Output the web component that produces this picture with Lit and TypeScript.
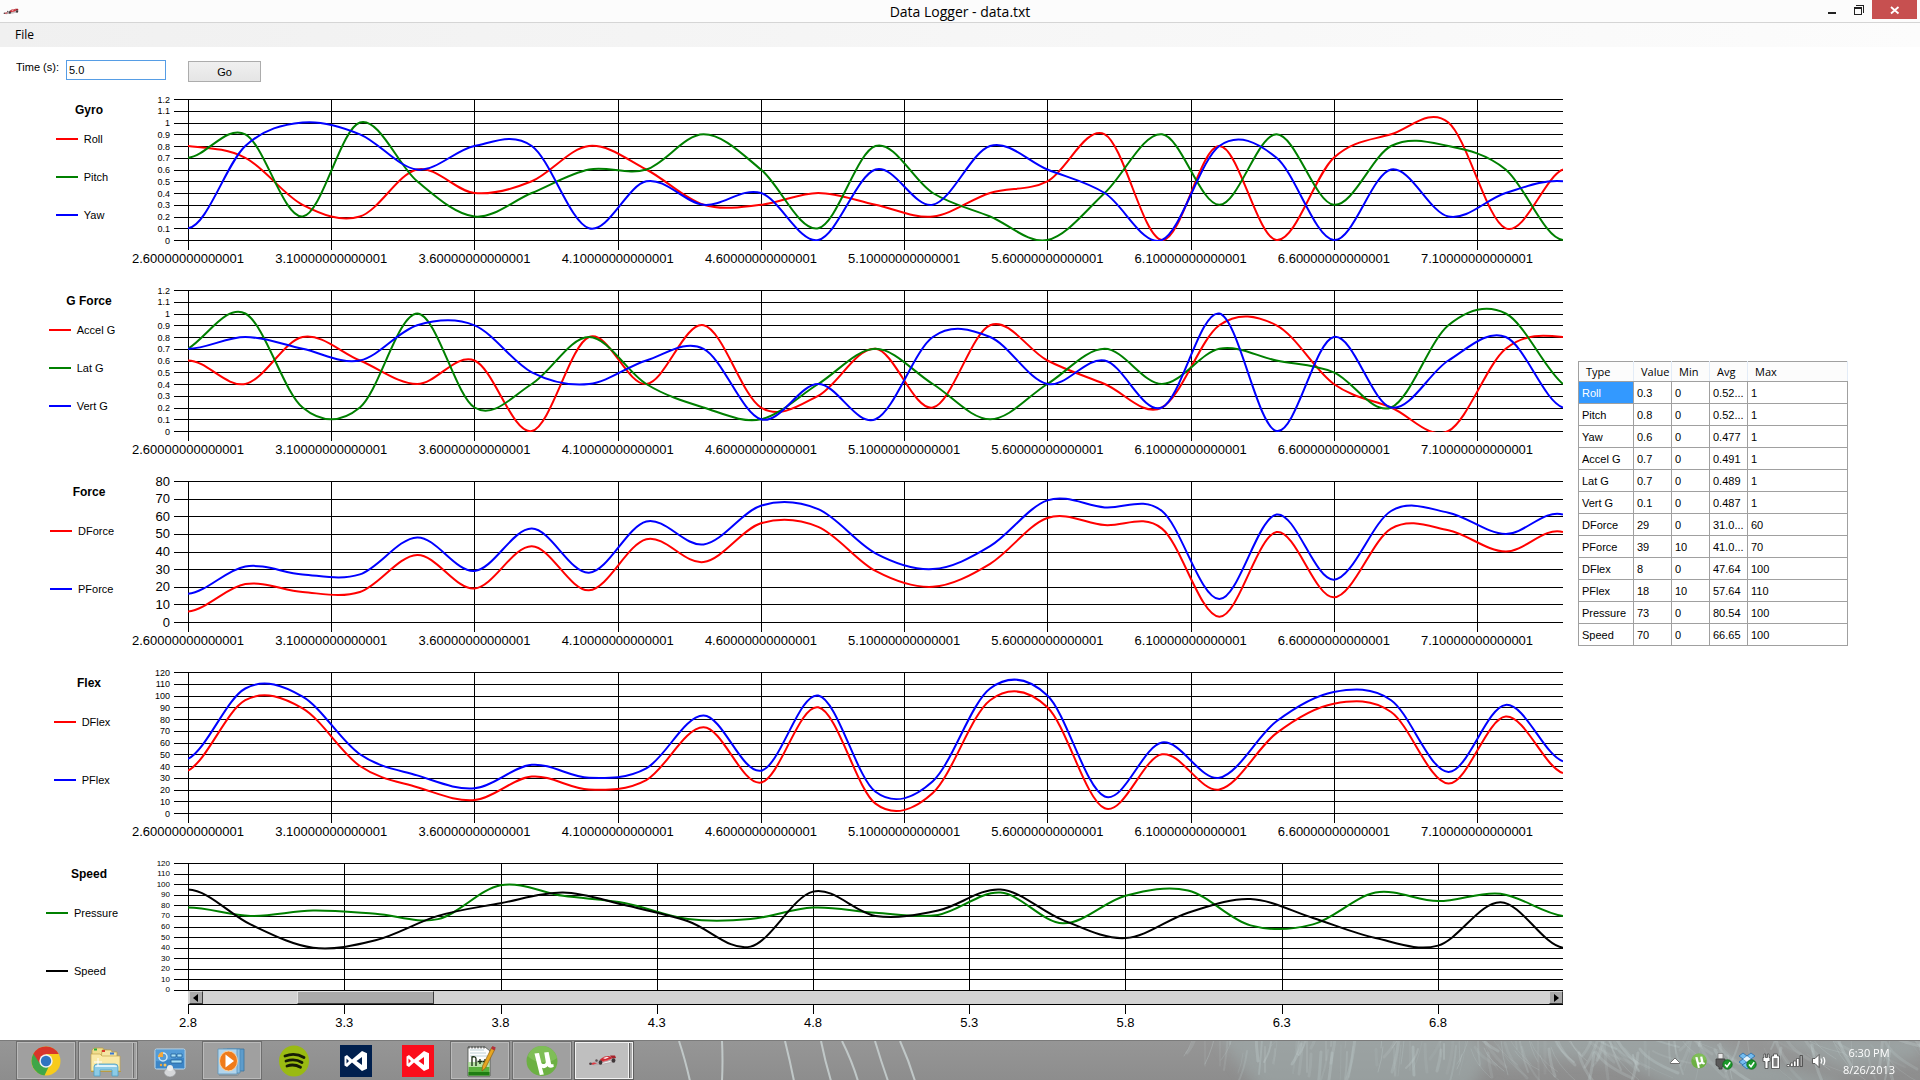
import { LitElement, html, svg, css, nothing } from "lit";
import { customElement, property, state } from "lit/decorators.js";
import { classMap } from "lit/directives/class-map.js";
import { styleMap } from "lit/directives/style-map.js";

interface Series {
  name: string;
  color: string;
  values: number[];
  /** Samples just outside the visible window, which shape the ends of the curve. */
  before: number;
  after: number;
}

interface ChartSpec {
  title: string;
  start: number;
  max: number;
  tick: number;
  labels: "small" | "tiny" | "large";
  plotHeight: number;
  suffix: string;
  scroll?: boolean;
  series: Series[];
}

const STEP = 0.2;
const GRID_STEP = 0.5;
const PLOT_WIDTH = 1375;

const RED = "#ff0000";
const GREEN = "#008000";
const BLUE = "#0000ff";

const dForce = [6, 21.5, 17, 17, 38, 19, 43, 18, 47, 34, 56, 54, 29, 20, 33, 59, 55, 53, 3, 51, 14, 53, 52, 40, 51];
const dFlex = [36, 96, 89, 40, 22, 11, 31, 20, 28, 73, 26, 90, 8, 17, 96, 90, 4, 50, 20, 68, 93, 86, 25, 82, 34];

const CHARTS: ChartSpec[] = [
  {
    title: "Gyro", start: 2.6, max: 1.2, tick: 0.1, labels: "small", plotHeight: 141, suffix: "0000000000001",
    series: [
      { name: "Roll", color: RED, before: 0.8, after: 0.5, values: [0.8, 0.7, 0.3, 0.2, 0.6, 0.4, 0.5, 0.8, 0.6, 0.3, 0.3, 0.4, 0.3, 0.2, 0.4, 0.5, 0.9, 0, 0.8, 0, 0.7, 0.9, 1, 0.1, 0.6] },
      { name: "Pitch", color: GREEN, before: 0.8, after: 0.5, values: [0.7, 0.9, 0.2, 1, 0.5, 0.2, 0.4, 0.6, 0.6, 0.9, 0.6, 0.1, 0.8, 0.4, 0.2, 0, 0.4, 0.9, 0.3, 0.9, 0.3, 0.8, 0.8, 0.6, 0] },
      { name: "Yaw", color: BLUE, before: 0.7, after: 0.3, values: [0.1, 0.8, 1, 0.9, 0.6, 0.8, 0.8, 0.1, 0.5, 0.3, 0.4, 0, 0.6, 0.3, 0.8, 0.6, 0.4, 0, 0.8, 0.7, 0, 0.6, 0.2, 0.4, 0.5] },
    ],
  },
  {
    title: "G Force", start: 2.6, max: 1.2, tick: 0.1, labels: "small", plotHeight: 141, suffix: "0000000000001",
    series: [
      { name: "Accel G", color: RED, before: 0.4, after: 0.6, values: [0.6, 0.4, 0.8, 0.6, 0.4, 0.6, 0, 0.8, 0.4, 0.9, 0.2, 0.3, 0.7, 0.2, 0.9, 0.6, 0.4, 0.2, 0.9, 0.9, 0.4, 0.2, 0, 0.7, 0.8] },
      { name: "Lat G", color: GREEN, before: 0.4, after: 0.2, values: [0.7, 1, 0.2, 0.2, 1, 0.2, 0.4, 0.8, 0.4, 0.2, 0.1, 0.4, 0.7, 0.4, 0.1, 0.4, 0.7, 0.4, 0.7, 0.6, 0.5, 0.2, 0.9, 1, 0.4] },
      { name: "Vert G", color: BLUE, before: 0.8, after: 0.5, values: [0.7, 0.8, 0.7, 0.6, 0.9, 0.9, 0.5, 0.4, 0.6, 0.7, 0.1, 0.4, 0.1, 0.8, 0.8, 0.4, 0.6, 0.2, 1, 0, 0.8, 0.2, 0.6, 0.8, 0.2] },
    ],
  },
  {
    title: "Force", start: 2.6, max: 80, tick: 10, labels: "large", plotHeight: 141, suffix: "0000000000001",
    series: [
      { name: "DForce", color: RED, before: 15, after: 20, values: dForce },
      { name: "PForce", color: BLUE, before: 25, after: 30, values: dForce.map((v) => v + 10) },
    ],
  },
  {
    title: "Flex", start: 2.6, max: 120, tick: 10, labels: "small", plotHeight: 141, suffix: "0000000000001",
    series: [
      { name: "DFlex", color: RED, before: 45, after: 50, values: dFlex },
      { name: "PFlex", color: BLUE, before: 55, after: 60, values: dFlex.map((v) => v + 10) },
    ],
  },
  {
    title: "Speed", start: 2.8, max: 120, tick: 10, labels: "tiny", plotHeight: 127, suffix: "", scroll: true,
    series: [
      { name: "Pressure", color: GREEN, before: 70, after: 76, values: [78, 70, 75, 72, 67, 99, 89, 82, 67, 67, 78, 73, 71, 92, 63, 89, 94, 61, 62, 92, 84, 91, 70] },
      { name: "Speed", color: "#000000", before: 66, after: 66, values: [95, 62, 40, 47, 70, 82, 92, 80, 65, 41, 93, 70, 75, 95, 66, 49, 73, 86, 68, 49, 42, 83, 40] },
    ],
  },
];

const COLUMNS = ["Type", "Value", "Min", "Avg", "Max"];
const ROWS: string[][] = [
  ["Roll", "0.3", "0", "0.52...", "1"],
  ["Pitch", "0.8", "0", "0.52...", "1"],
  ["Yaw", "0.6", "0", "0.477", "1"],
  ["Accel G", "0.7", "0", "0.491", "1"],
  ["Lat G", "0.7", "0", "0.489", "1"],
  ["Vert G", "0.1", "0", "0.487", "1"],
  ["DForce", "29", "0", "31.0...", "60"],
  ["PForce", "39", "10", "41.0...", "70"],
  ["DFlex", "8", "0", "47.64", "100"],
  ["PFlex", "18", "10", "57.64", "110"],
  ["Pressure", "73", "0", "80.54", "100"],
  ["Speed", "70", "0", "66.65", "100"],
];

/** Cardinal spline through evenly spaced samples. */
function splinePath(series: Series, max: number, width: number, height: number): string {
  const dx = width / (series.values.length - 1);
  const pts = [series.before, ...series.values, series.after].map((v, i) => [(i - 1) * dx, height - (v / max) * height]);
  let d = `M${pts[1][0].toFixed(1)} ${pts[1][1].toFixed(1)}`;
  for (let i = 1; i < pts.length - 2; i++) {
    const [a, b, c, e] = [pts[i - 1], pts[i], pts[i + 1], pts[i + 2]];
    const p = [b[0] + (c[0] - a[0]) / 6, b[1] + (c[1] - a[1]) / 6, c[0] - (e[0] - b[0]) / 6, c[1] - (e[1] - b[1]) / 6, c[0], c[1]];
    d += `C${p.map((n) => n.toFixed(1)).join(" ")}`;
  }
  return d;
}

@customElement("time-chart")
export class TimeChart extends LitElement {
  @property({ attribute: false }) spec!: ChartSpec;

  static styles = css`
    :host {
      display: grid;
      grid-template-columns: 130px 40px minmax(0, 1fr);
      column-gap: 0;
      padding-bottom: 23px;
      font-family: "Liberation Sans", Arial, sans-serif;
      color: #000;
    }
    :host(:last-of-type) {
      padding-bottom: 0;
    }
    .legend {
      padding-left: 34px;
    }
    .title {
      margin: 0;
      padding: 3px 0 2px 14px;
      font-size: 12px;
      line-height: 16px;
      font-weight: 700;
      text-align: center;
    }
    .items {
      margin: 0;
      padding: 0;
      list-style: none;
      display: grid;
      justify-content: center;
      grid-auto-rows: 38px;
      font-size: 11px;
    }
    .items.pair {
      grid-auto-rows: 58px;
    }
    .item {
      display: flex;
      align-items: center;
      gap: 6px;
      white-space: nowrap;
    }
    .swatch {
      display: block;
      width: 22px;
      height: 2px;
    }
    .ylabels {
      display: flex;
      flex-direction: column;
      justify-content: space-between;
      align-items: flex-end;
      line-height: 0;
    }
    .ylabels span {
      display: flex;
      align-items: center;
      height: 1px;
    }
    .small {
      font-size: 9px;
    }
    .tiny {
      font-size: 8px;
    }
    .large {
      font-size: 13px;
    }
    .body {
      padding-left: 18px;
      min-width: 0;
    }
    .plot {
      display: block;
      width: 100%;
      overflow: visible;
    }
    .grid line {
      stroke: #000;
      stroke-width: 1;
      shape-rendering: crispEdges;
      vector-effect: non-scaling-stroke;
    }
    .curve {
      fill: none;
      stroke-width: 2;
      vector-effect: non-scaling-stroke;
    }
    .xlabels {
      display: grid;
      padding-top: 10px;
      font-size: 13px;
      line-height: 16px;
    }
    .xlabels span {
      display: flex;
      justify-content: center;
      width: 0;
      white-space: nowrap;
    }
    .scroll {
      position: relative;
      display: grid;
      grid-template-columns: 14px minmax(0, 1fr) 14px;
      height: 13px;
      padding-left: 1px;
      background: #d3d3d3;
      border-bottom: 1px solid #000;
    }
    .arrow {
      display: grid;
      place-items: center;
      padding: 0;
      background: #a9a9a9;
      border: 1px solid;
      border-color: #d3d3d3 #3c3c3c #3c3c3c #d3d3d3;
    }
    .arrow svg {
      display: block;
      width: 6px;
      height: 8px;
    }
    .range {
      appearance: none;
      width: 100%;
      height: 13px;
      margin: 0;
      background: #d3d3d3;
    }
    .range::-webkit-slider-thumb {
      appearance: none;
      width: 137px;
      height: 13px;
      background: #a9a9a9;
      border: 1px solid;
      border-color: #e4e4e4 #3c3c3c #3c3c3c #e4e4e4;
      border-radius: 0;
    }
  `;

  render() {
    const s = this.spec;
    const h = s.plotHeight;
    const span = (s.series[0].values.length - 1) * STEP;
    const rows = Math.round(s.max / s.tick);
    const ticks = Array.from({ length: rows + 1 }, (_, i) => i);
    const xCount = Math.floor(span / GRID_STEP + 0.001) + 1;
    const xs = Array.from({ length: xCount }, (_, i) => i);
    const rest = span - (xCount - 1) * GRID_STEP;
    const xColumns = `repeat(${xCount - 1}, minmax(0, 50fr)) minmax(0, ${Math.round(rest * 100)}fr)`;
    return html`
      <div class="legend">
        <h2 class="title">${s.title}</h2>
        <ul class=${classMap({ items: true, pair: s.series.length === 2 })}>
          ${s.series.map(
            (r) => html`<li class="item"><span class="swatch" style=${styleMap({ background: r.color })}></span>${r.name}</li>`
          )}
        </ul>
      </div>
      <div class="ylabels ${s.labels}" style=${styleMap({ height: `${h + 1}px` })}>
        ${ticks.map((i) => html`<span>${Number(((rows - i) * s.tick).toFixed(1))}</span>`)}
      </div>
      <div class="body">
        <svg class="plot" height=${h + 1} viewBox="0 0 ${PLOT_WIDTH} ${h + 1}" preserveAspectRatio="none" role="img" aria-label=${s.title}>
          <g class="grid">
            ${ticks.map((i) => {
              const y = Math.round((i * h) / rows) + 0.5;
              return svg`<line x1="-14" x2=${PLOT_WIDTH} y1=${y} y2=${y}></line>`;
            })}
            ${xs.map((i) => {
              const x = Math.round((i * GRID_STEP * PLOT_WIDTH) / span) + 0.5;
              return svg`<line x1=${x} x2=${x} y1="0" y2="151"></line>`;
            })}
          </g>
          <svg x="0" y="0" width=${PLOT_WIDTH} height=${h + 1} overflow="hidden">
            ${s.series.map((r) => svg`<path class="curve" stroke=${r.color} d=${splinePath(r, s.max, PLOT_WIDTH, h)}></path>`)}
          </svg>
        </svg>
        ${s.scroll
          ? html`<div class="scroll">
              <button class="arrow" aria-label="Scroll left"><svg viewBox="0 0 6 8"><path d="M5 0v8L0 4z" /></svg></button>
              <input class="range" type="range" min="0" max="1000" value="78" aria-label="Time window" />
              <button class="arrow" aria-label="Scroll right"><svg viewBox="0 0 6 8"><path d="M1 0v8l5-4z" /></svg></button>
            </div>`
          : nothing}
        <div class="xlabels" style=${styleMap({ gridTemplateColumns: xColumns })}>
          ${xs.map((i) => html`<span>${(s.start + i * GRID_STEP).toFixed(1)}${s.suffix}</span>`)}
        </div>
      </div>
    `;
  }
}

const carArt = svg`
  <path d="M1 8.500 6 6.800l5-2 4-2.600 4-1.200 5 .3 4 1.500-.5 3-3 1.500-5 1.500-7 1-7 .8z" fill="#b5aeb0"/>
  <path d="M12 4.500l4-2.700 4-.8 3 .8 1 1.800-5 1.900-6 1.200z" fill="#cf2a33"/>
  <path d="M15 3l4-1.200 2 .7-4 1.600z" fill="#fbe9ea"/>
  <path d="M22 .5h5l1 2.500-4 .3z" fill="#a8222b"/>
  <path d="M1 8.700l5-1.300 3 .8-4 1.500z" fill="#dc3a43"/>
  <ellipse cx="12.500" cy="7.500" rx="1.800" ry="2.300" fill="#3d3537"/>
  <ellipse cx="25.500" cy="5.500" rx="1.900" ry="2.300" fill="#3f3739"/>
  <ellipse cx="2.500" cy="8.800" rx="1.300" ry="1.300" fill="#4a4244"/>
  <ellipse cx="8.500" cy="5.500" rx="1.200" ry="1.300" fill="#5c5255"/>
  <path d="M14.500 8l8-2.200v1.200l-8 1.800z" fill="#f6f2f2"/>
  <path d="M15 6l6-1.700v.8l-6 1.700z" fill="#e7585f"/>`;

const utorrentArt = svg`
  <ellipse cx="16" cy="16" rx="15.500" ry="15" fill="#6cb043"/>
  <path d="M16 1a15.500 15 0 0 1 15 12C22 20 8 18 2 11 4 5 9 1 16 1z" fill="#8cc866" opacity=".6"/>
  <path d="M8.500 8.500 13 8l2.300 9.500c.6 2.300 4.800 2 4.500-.8L18.200 7.500l4.400-.5 2.300 11c.3 1.600 1.300 1.500 2.400 1.100l.5 2.700c-2.700 1.600-5.400 1.100-6.300-.7-1.300 2-3.800 2.600-5.500 1.600l1.800 6.800-4 .5z" fill="#fff"/>`;

const TASK_ICONS: Record<string, unknown> = {
  Chrome: svg`
    <circle cx="16" cy="16" r="14.500" fill="#f7cb1b"/>
    <path d="M16 16 3.400 8.800A14.500 14.500 0 0 0 14.500 30.400L20 19z" fill="#3fa648"/>
    <path d="M16 16V9h12.700A14.500 14.500 0 0 0 3.400 8.800L9.500 18z" fill="#d8352a"/>
    <circle cx="16" cy="16" r="6.700" fill="#f1f1f1"/><circle cx="16" cy="16" r="5.200" fill="#2f74c0"/>`,
  Explorer: svg`
    <path d="M4 3h9l1 2h3v20H2V5z" fill="#f1dd8d" stroke="#b99b42" stroke-width=".7"/>
    <path d="M12 5h9l1 2h5v18H10z" fill="#f5e5a3" stroke="#b99b42" stroke-width=".7"/>
    <path d="M4 3.500h3v2H4z" fill="#29a93d"/><path d="M12 5h3v2h-3z" fill="#d9392b"/><path d="M20 7.500h4v2h-4z" fill="#3b78d4"/>
    <path d="M1 9h9l2 2h18v15H1z" fill="#fae9a6" stroke="#c2a44b" stroke-width=".7"/>
    <path d="M1 26h30v1H1z" fill="#b99b42"/>
    <path d="M4 31V22q0-3 3-3h18q3 0 3 3v9h-6v-6H10v6z" fill="#8ccbe6" stroke="#4f9fc4" stroke-width=".8"/>
    <path d="M5 22q0-2 3-2h16q3 0 3 2z" fill="#dff3fb"/><path d="M8 13v8M4 17h8" stroke="#fff" stroke-width="1"/>`,
  "Control Panel": svg`
    <rect x="1" y="4" width="30" height="20" rx="1.500" fill="#3c86c7" stroke="#bcdcf2" stroke-width="1"/>
    <path d="M2 5h28v8C20 11 10 18 2 16z" fill="#5ea5de" opacity=".7"/>
    <circle cx="9" cy="12" r="4" fill="none" stroke="#cfe8f8" stroke-width="1.500"/>
    <path d="M9 12V7a5 5 0 0 0-5 5z" fill="#f2a73a"/>
    <path d="M17 9h5v3h-5zM23 9h5v3h-5zM17 15h11v3H17z" fill="#a9e1f7" stroke="#22609a" stroke-width=".8"/>
    <circle cx="7" cy="20" r="1.200" fill="#f2a73a"/><circle cx="11" cy="20" r="1.500" fill="#f7c35c"/>
    <path d="M10 28q0-4 6-6 6 2 6 6-2 4-6 4t-6-4z" fill="#d5d7d9" stroke="#909396" stroke-width=".6"/>
    <circle cx="16" cy="23" r="3" fill="#eceded"/>`,
  "Media Player": svg`
    <path d="M11 4h17v22H11z" fill="#5d9ccb" stroke="#3b749f" stroke-width=".8"/>
    <path d="M7 4h17v24H7z" fill="#8dbfe2" stroke="#4d8ab6" stroke-width=".8"/>
    <path d="M2 4h19v25H2z" fill="#b2d5ec" stroke="#5a94bd" stroke-width=".8"/>
    <path d="M3 30h18l2-1v1l-2 1H3z" fill="#687f8e" opacity=".5"/>
    <ellipse cx="12.500" cy="16" rx="9" ry="10" fill="#ef7b1a" stroke="#fbd1a0" stroke-width="1"/>
    <path d="M9.500 9.500v13l8.500-6.500z" fill="#fff"/>`,
  Spotify: svg`
    <ellipse cx="16" cy="16" rx="15" ry="15.500" fill="#9aba12"/>
    <path d="M7 11q10-4 19 1.500M8 16q9-3 16 1.500M9 21q7-2.500 13.500 1.300" fill="none" stroke="#151a05" stroke-width="2.800" stroke-linecap="round"/>`,
  "Visual Studio": svg`
    <path d="M0 0h32v32H0z" fill="#01204e"/>
    <path d="M22 6l5 2.200v15.600L22 26 12 17.500 7 22l-2.500-1.500v-9L7 10l5 4.500zM22 12l-5.500 4 5.500 4zM6.500 13.500v5L9 16z" fill="#fff" fill-rule="evenodd"/>`,
  Blend: svg`
    <path d="M0 0h32v32H0z" fill="#fb0d1b"/>
    <path d="M22 6l5 2.200v15.600L22 26 12 17.500 7 22l-2.500-1.500v-9L7 10l5 4.500zM22 12l-5.500 4 5.500 4zM6.500 13.500v5L9 16z" fill="#fff" fill-rule="evenodd"/>`,
  Notepad: svg`
    <path d="M4 2h17l5 4v25H4z" fill="#fdfdfd" stroke="#4a4f4a" stroke-width=".8"/>
    <path d="M4.500 17h21v13.500h-21z" fill="#58b13b"/><path d="M4.500 17h21v5h-21z" fill="#b9e3a6"/><path d="M4.500 27h21v3.500h-21z" fill="#1e7d12"/>
    <path d="M6 5h14M6 8h16M6 11h17" stroke="#bcd0d6" stroke-width="1"/>
    <path d="M5 1.500v2M8 1.500v2M11 1.500v2M14 1.500v2M17 1.500v2M20 1.500v2" stroke="#333" stroke-width="1"/>
    <path d="M8 21v-9q4-1 4 2v7M16 14v5M13.500 16.500h5M21 14v5M18.800 16.500H23" fill="none" stroke="#13290f" stroke-width="1.300"/>
    <path d="M28 2l3 2-9.500 19-3.500 3 .5-5z" fill="#e7a622" stroke="#8a5d10" stroke-width=".7"/>
    <path d="M28.500 1l3.300 1.500-1.300 3-3.300-1.700z" fill="#b3303b"/>`,
  uTorrent: utorrentArt,
  "Data Logger": svg`<g transform="translate(2 10)">${carArt}</g>`,
};

const TASKS: { name: string; state: "open" | "idle" | "active"; stacked?: boolean }[] = [
  { name: "Chrome", state: "open" },
  { name: "Explorer", state: "open", stacked: true },
  { name: "Control Panel", state: "idle" },
  { name: "Media Player", state: "open" },
  { name: "Spotify", state: "idle" },
  { name: "Visual Studio", state: "idle" },
  { name: "Blend", state: "idle" },
  { name: "Notepad", state: "open" },
  { name: "uTorrent", state: "open" },
  { name: "Data Logger", state: "active", stacked: true },
];

const checkBadge = svg`<circle cx="14.500" cy="13.500" r="4.700" fill="#1d9a2c" stroke="#0d6a18" stroke-width=".8"/><path d="M12 13.500l2 2.300 3.200-4.600" fill="none" stroke="#fff" stroke-width="1.500"/>`;

const TRAY: { name: string; art: unknown }[] = [
  { name: "Show hidden icons", art: svg`<path d="M5.500 12.500h9v-1L10 7l-4.500 4.500z" fill="#fff" stroke="#555" stroke-width=".8"/>` },
  { name: "uTorrent", art: svg`<g transform="translate(2 2) scale(.5)">${utorrentArt}</g>` },
  {
    name: "Safely remove hardware",
    art: svg`<path d="M5 2.500h5V8H5z" fill="#e8e8e8" stroke="#777" stroke-width=".8"/><path d="M3 8h9v6l-3 2v2H6v-2l-3-2z" fill="#5a5a5a" stroke="#383838" stroke-width=".8"/>${checkBadge}`,
  },
  {
    name: "Dropbox",
    art: svg`<g fill="#74bdf0" stroke="#2b6ba8" stroke-width=".8"><path d="M2 5l4-3 4 3-4 3zM10 5l4-3 4 3-4 3zM2 11l4-3 4 3-4 3zM10 11l4-3 4 3-4 3z"/><path d="M5 14l5-3 5 3-5 4z"/></g><path d="M6 8l4-3 4 3-4 3z" fill="#e6f4fd"/>${checkBadge}`,
  },
  {
    name: "Power",
    art: svg`<path d="M3 3h1.500v3.500h2V3H8v3.500h1v4H7v7H4v-7H2v-4h1z" fill="#fff" stroke="#484848" stroke-width=".8"/><path d="M10.500 5h2V3h4v2h2v12.500h-8z" fill="#fff" stroke="#484848" stroke-width=".8"/><path d="M12.500 7h4v8.500h-4z" fill="#7d7d7d"/>`,
  },
  {
    name: "Network",
    art: svg`<path d="M2 13.500h2.500v2H2zM5.500 12H8v3.500H5.500zM8.500 10H11v5.500H8.500zM11.500 7.500H14v8h-2.500z" fill="#fff" stroke="#444" stroke-width=".7"/><path d="M15 4.500h2.500v11H15z" fill="#a5a5a5" stroke="#444" stroke-width=".8"/>`,
  },
  {
    name: "Volume",
    art: svg`<path d="M3.500 7.500h2.500l4-4v13l-4-4H3.500z" fill="#fff" stroke="#444" stroke-width=".8"/><path d="M12 7.500q1.500 2.500 0 5M14.500 6q2.500 4 0 8" fill="none" stroke="#fff" stroke-width="1.200"/>`,
  },
];

/** Deterministic strands for the wallpaper seen through the translucent bar. */
function strands(): { d: string; w: number; o: number }[] {
  let seed = 11;
  const rnd = () => ((seed = (seed * 16807) % 2147483647) / 2147483647);
  const out: { d: string; w: number; o: number }[] = [];
  for (let i = 0; i < 170; i++) {
    const x = 1195 + rnd() * 725;
    const y = rnd() * 30 - 16;
    const lean = x < 1470 ? -12 + rnd() * 14 : x < 1560 ? -12 + rnd() * 44 : -16 + rnd() * 70;
    const len = 14 + rnd() * 28;
    out.push({
      d: `M${x.toFixed(0)} ${y.toFixed(0)}q${(lean * 0.2).toFixed(0)} ${(len * 0.5).toFixed(0)} ${lean.toFixed(0)} ${len.toFixed(0)}`,
      w: 1 + Math.floor(rnd() * 3),
      o: 0.08 + rnd() * 0.22,
    });
  }
  return out;
}

@customElement("task-bar")
export class TaskBar extends LitElement {
  static styles = css`
    :host {
      position: relative;
      display: flex;
      align-items: stretch;
      height: 40px;
      box-sizing: border-box;
      border-top: 1px solid #7b7b7b;
      padding: 0 0 0 16px;
      background: linear-gradient(#969696, #8d8d8d);
      overflow: hidden;
      font-family: "Open Sans", "Noto Sans", sans-serif;
    }
    .wallpaper {
      position: absolute;
      top: 0;
      right: 0;
      width: 1920px;
      height: 40px;
    }
    .tasks {
      position: relative;
      display: flex;
      gap: 2px;
      flex: 1;
    }
    .task {
      display: grid;
      place-items: center;
      box-sizing: border-box;
      width: 60px;
      padding: 0;
      border: 1px solid transparent;
      background: none;
    }
    .task svg {
      display: block;
      width: 32px;
      height: 32px;
    }
    .open {
      background: #a0a0a0;
      border-color: #6e6e6e;
      box-shadow: inset 0 0 0 1px #bababa;
    }
    .active {
      background: linear-gradient(#b4b4b4, #cacaca);
      border-color: #5f5f5f;
      box-shadow: inset 0 0 0 1px #f2f2f2;
    }
    .stacked {
      padding-right: 4px;
    }
    .stacked.open {
      background: linear-gradient(90deg, #a0a0a0 53px, #bababa 53px 54px, #6e6e6e 54px 55px, #a0a0a0 55px);
    }
    .stacked.active {
      background: linear-gradient(90deg, #bfbfbf 53px, #f2f2f2 53px 54px, #5f5f5f 54px 55px, #a9a9a9 55px);
    }
    .tray {
      position: relative;
      display: flex;
      align-items: center;
      padding-right: 23px;
    }
    .tray button {
      display: grid;
      place-items: center;
      width: 24px;
      height: 24px;
      padding: 0;
      border: 0;
      background: none;
    }
    .tray svg {
      display: block;
      width: 20px;
      height: 20px;
    }
    .clock {
      padding-left: 10px;
      width: 56px;
      color: #fff;
      font-size: 11px;
      line-height: 17px;
      text-align: center;
      white-space: nowrap;
    }
    time {
      display: block;
    }
  `;

  render() {
    return html`
      <svg class="wallpaper" viewBox="0 0 1920 40" aria-hidden="true">
        <defs>
          <filter id="soft" x="-5%" y="-50%" width="110%" height="200%"><feGaussianBlur stdDeviation="7" /></filter>
          <filter id="fine" x="-5%" y="-50%" width="110%" height="200%"><feGaussianBlur stdDeviation="0.6" /></filter>
        </defs>
        <g filter="url(#soft)" fill="#a2b0b0" opacity=".5">
          <path d="M1215-10h255l20 24-20 36h-210l-20-26z" />
          <path d="M1490-10h200l60 26 90 24v10h-160l-60-30-80-4-30 10z" />
          <path d="M1760-6h160v22l-70 14z" />
        </g>
        <g fill="none" stroke="#c8d6d6" stroke-linecap="round" filter="url(#fine)">
          ${strands().map((s) => svg`<path d=${s.d} stroke-width=${s.w} opacity=${s.o.toFixed(2)}></path>`)}
        </g>
        <g fill="none" stroke="#d0dada" stroke-width="2" opacity=".75" filter="url(#fine)">
          <path d="M679 0q6 18 11 40M722 0q1 20 0 40M785 0q5 20 9 40M821 0q4 20 10 40M842 0q10 20 16 40M875 0q6 20 13 40M900 0q9 20 15 40" />
        </g>
      </svg>
      <nav class="tasks" aria-label="Running programs">
        ${TASKS.map(
          (t) => html`<button class=${classMap({ task: true, [t.state]: true, stacked: !!t.stacked })} aria-label=${t.name}>
            <svg viewBox="0 0 32 32">${TASK_ICONS[t.name]}</svg>
          </button>`
        )}
      </nav>
      <div class="tray">
        ${TRAY.map((t) => html`<button aria-label=${t.name}><svg viewBox="0 0 20 20">${t.art}</svg></button>`)}
        <div class="clock"><time>6:30 PM</time><time>8/26/2013</time></div>
      </div>
    `;
  }
}

@customElement("app-root")
export class AppRoot extends LitElement {
  @state() private time = "5.0";
  @state() private selected = 0;

  static styles = css`
    :host {
      display: flex;
      flex-direction: column;
      min-height: 100vh;
      background: #fff;
      color: #000;
      font-family: "Liberation Sans", Arial, sans-serif;
      font-size: 11px;
    }
    .titlebar {
      display: grid;
      grid-template-columns: 1fr auto 1fr;
      height: 22px;
      background: #fcfcfc;
      border-bottom: 1px solid #d5d5d5;
      font-family: "Open Sans", "Noto Sans", sans-serif;
    }
    .appicon {
      width: 16px;
      height: 7px;
      padding: 8px 0 0 3px;
    }
    .caption {
      margin: 0;
      padding-top: 2px;
      font-size: 14px;
      font-weight: 400;
      line-height: 20px;
    }
    .window {
      display: flex;
      justify-content: flex-end;
      height: 19px;
      padding-right: 3px;
    }
    .window button {
      display: grid;
      place-items: center;
      width: 27px;
      padding: 0;
      border: 0;
      background: none;
    }
    .window .close {
      width: 45px;
      background: #c75050;
    }
    .window svg {
      display: block;
      width: 12px;
      height: 12px;
    }
    .menubar {
      height: 24px;
      background: linear-gradient(90deg, #f0f0f0, #fcfcfc);
      font-family: "Open Sans", "Noto Sans", sans-serif;
    }
    .menu {
      height: 23px;
      padding: 0 15px;
      border: 0;
      background: none;
      font: inherit;
      font-size: 12px;
    }
    .seek {
      display: flex;
      align-items: flex-start;
      padding: 13px 16px 17px;
    }
    .seek label {
      width: 50px;
      line-height: 14px;
      white-space: nowrap;
    }
    .seek input {
      box-sizing: border-box;
      width: 100px;
      height: 20px;
      margin: 0 22px 0 0;
      padding: 0 2px;
      border: 1px solid #569de5;
      outline: 0;
      background: #fff;
      font: inherit;
    }
    .seek button {
      width: 73px;
      height: 21px;
      margin-top: 1px;
      padding: 0;
      border: 1px solid #acacac;
      background: linear-gradient(#f0f0f0, #e5e5e5);
      font: inherit;
    }
    .content {
      flex: 1;
      display: grid;
      grid-template-columns: minmax(0, 1fr) 270px;
      column-gap: 15px;
      padding: 0 72px 0 0;
    }
    .stats {
      padding-top: 262px;
    }
    table {
      width: 100%;
      table-layout: fixed;
      border-collapse: collapse;
    }
    .narrow {
      width: 38px;
    }
    .first {
      width: 55px;
    }
    th,
    td {
      padding: 0 0 0 3px;
      text-align: left;
      white-space: nowrap;
    }
    th {
      height: 19px;
      padding-left: 7px;
      border: 1px solid #e3ecf7;
      border-top-color: #a0a0a0;
      border-bottom-color: #a0a0a0;
      background: #fcfcfc;
      font-family: "Open Sans", "Noto Sans", sans-serif;
      font-size: 11px;
      font-weight: 400;
      line-height: 16px;
    }
    th:first-child {
      border-left-color: #a0a0a0;
    }
    td {
      height: 21px;
      border: 1px solid #a0a0a0;
      line-height: 16px;
    }
    .chosen {
      background: #3399ff;
      color: #fff;
    }
  `;

  render() {
    return html`
      <header class="titlebar">
        <svg class="appicon" viewBox="0 0 29 11" aria-hidden="true">${carArt}</svg>
        <h1 class="caption">Data Logger - data.txt</h1>
        <div class="window">
          <button aria-label="Minimize"><svg viewBox="0 0 12 12"><path d="M2 8h8v2H2z" fill="#222" /></svg></button>
          <button aria-label="Restore">
            <svg viewBox="0 0 12 12"><path d="M3 1h8v8h-1V2H3zM1 3h8v8H1zm1 2v5h6V5z" fill="#222" fill-rule="evenodd" /></svg>
          </button>
          <button class="close" aria-label="Close">
            <svg viewBox="0 0 12 12"><path d="M2 3l7.500 6.500M9.500 3L2 9.500" stroke="#fff" stroke-width="1.800" /></svg>
          </button>
        </div>
      </header>
      <nav class="menubar"><button class="menu">File</button></nav>
      <form class="seek" @submit=${(e: Event) => e.preventDefault()}>
        <label for="time">Time (s):</label>
        <input id="time" type="text" .value=${this.time} @input=${(e: Event) => (this.time = (e.target as HTMLInputElement).value)} />
        <button type="submit">Go</button>
      </form>
      <main class="content">
        <div class="charts">${CHARTS.map((c) => html`<time-chart .spec=${c}></time-chart>`)}</div>
        <div class="stats">
          <table aria-label="Statistics">
            <colgroup>
              <col class="first" /><col class="narrow" /><col class="narrow" /><col class="narrow" /><col />
            </colgroup>
            <thead>
              <tr>${COLUMNS.map((c) => html`<th scope="col">${c}</th>`)}</tr>
            </thead>
            <tbody>
              ${ROWS.map(
                (r, i) => html`<tr @click=${() => (this.selected = i)}>
                  ${r.map((v, j) => html`<td class=${classMap({ chosen: i === this.selected && j === 0 })}>${v}</td>`)}
                </tr>`
              )}
            </tbody>
          </table>
        </div>
      </main>
      <task-bar></task-bar>
    `;
  }
}
